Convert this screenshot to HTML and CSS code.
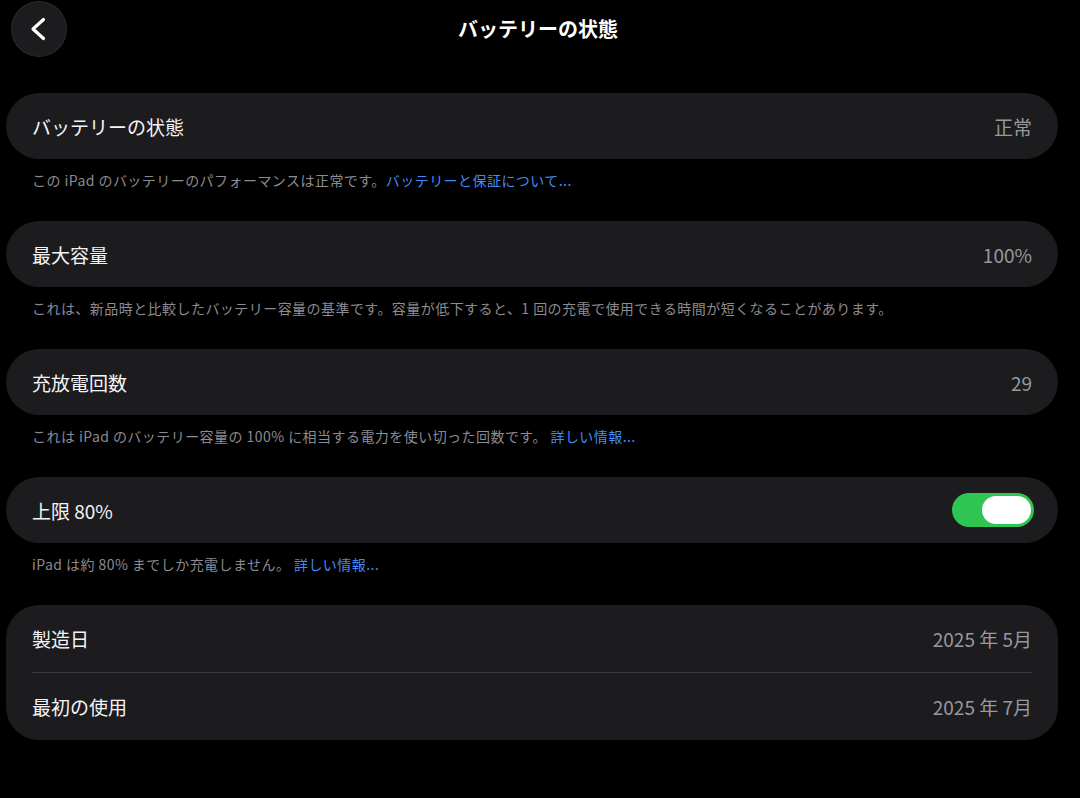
FILE: index.html
```html
<!DOCTYPE html>
<html lang="ja">
<head>
    <meta charset="UTF-8">
    <meta name="viewport" content="width=device-width, initial-scale=1.0">
    <title>バッテリーの状態</title>
    <link rel="stylesheet" href="styles.css">
</head>
<body>
    <header class="topbar">
        <button type="button" class="back">
            <svg viewBox="0 0 56 56" width="56" height="56"><path d="M32.5 18.5 L22 28 L32.5 37.5" fill="none" stroke="#fff" stroke-width="3.2" stroke-linecap="round" stroke-linejoin="round"/></svg>
        </button>
        <h1 class="topbar__title">バッテリーの状態</h1>
        <span></span>
    </header>

    <main class="list">
        <section class="group">
            <div class="card">
                <div class="row">
                    <span class="row__label">バッテリーの状態</span>
                    <span class="row__value">正常</span>
                </div>
            </div>
            <p class="note">この iPad のバッテリーのパフォーマンスは正常です。<a class="note__link" href="#">バッテリーと保証について...</a></p>
        </section>

        <section class="group">
            <div class="card">
                <div class="row">
                    <span class="row__label">最大容量</span>
                    <span class="row__value">100%</span>
                </div>
            </div>
            <p class="note">これは、新品時と比較したバッテリー容量の基準です。容量が低下すると、1 回の充電で使用できる時間が短くなることがあります。</p>
        </section>

        <section class="group">
            <div class="card">
                <div class="row">
                    <span class="row__label">充放電回数</span>
                    <span class="row__value">29</span>
                </div>
            </div>
            <p class="note">これは iPad のバッテリー容量の 100% に相当する電力を使い切った回数です。 <a class="note__link" href="#">詳しい情報...</a></p>
        </section>

        <section class="group">
            <div class="card">
                <div class="row row_toggle">
                    <span class="row__label">上限 80%</span>
                    <span class="switch switch_on"><span class="switch__knob"></span></span>
                </div>
            </div>
            <p class="note">iPad は約 80% までしか充電しません。 <a class="note__link" href="#">詳しい情報...</a></p>
        </section>

        <section class="group">
            <div class="card card_tall">
                <div class="row">
                    <span class="row__label">製造日</span>
                    <span class="row__value">2025 年 5月</span>
                </div>
                <div class="divider"></div>
                <div class="row">
                    <span class="row__label">最初の使用</span>
                    <span class="row__value">2025 年 7月</span>
                </div>
            </div>
        </section>
    </main>
</body>
</html>
```

FILE: styles.css
```css
* {
    box-sizing: border-box;
}
body {
    margin: 0;
    background-color: #000;
    color: #f2f2f4;
    font-family: "Noto Sans CJK JP", "Noto Sans", sans-serif;
    height: 798px;
    overflow: hidden;
}
.topbar {
    display: grid;
    grid-template-columns: 56px 1fr 56px;
    align-items: center;
    height: 57px;
    padding: 1px 11px 0 11px;
}
.back {
    width: 56px;
    height: 56px;
    padding: 0;
    border-radius: 50%;
    border: none;
    box-shadow: inset 0 0 0 1px rgba(255, 255, 255, 0.07);
    background-color: #1c1c1e;
}
.back svg {
    display: block;
}
.topbar__title {
    margin: 0;
    text-align: center;
    font-size: 20px;
    font-weight: 700;
    line-height: 24px;
    color: #fff;
    padding-right: 4px;
}
.list {
    padding: 36px 22px 0 6px;
}
.group {
    margin-bottom: 32px;
}
.card {
    background-color: #1c1c1e;
    border-radius: 33px;
    padding: 0 26px;
}
.row {
    display: flex;
    align-items: center;
    justify-content: space-between;
    height: 66px;
}
.card_tall .row {
    height: 67px;
}
.row__label {
    font-size: 19px;
    color: #f4f4f6;
}
.row__value {
    font-size: 19px;
    color: #98989e;
}
.row_toggle {
    margin-right: -2px;
}
.divider {
    height: 1px;
    background-color: #38383a;
}
.note {
    margin: 0;
    padding: 12px 26px 0 26px;
    font-size: 14px;
    line-height: 18px;
    letter-spacing: 0.45px;
    color: #8b8b91;
}
.note__link {
    color: #3f8cf6;
    text-decoration: none;
}
.switch {
    display: flex;
    width: 82px;
    height: 34px;
    border-radius: 17px;
    padding: 3px;
    background-color: #2fc552;
}
.switch_on {
    justify-content: flex-end;
}
.switch__knob {
    width: 49px;
    height: 28px;
    border-radius: 14px;
    background-color: #fff;
}
```
